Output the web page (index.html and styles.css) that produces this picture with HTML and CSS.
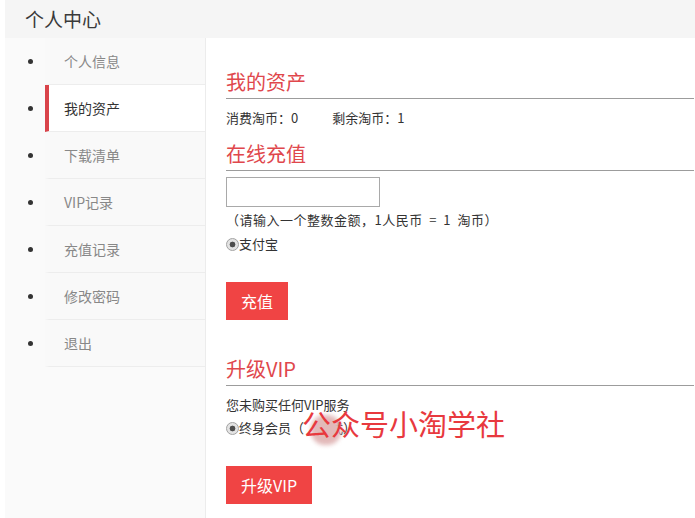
FILE: index.html
```html
<!DOCTYPE html>
<html lang="zh-CN">
<head>
<meta charset="utf-8">
<title>个人中心</title>
<link rel="stylesheet" href="styles.css">
</head>
<body>
<div class="page">
  <header class="topbar">个人中心</header>
  <div class="layout">
    <ul class="sidenav">
      <li class="nav-item"><span class="dot"></span><a class="nav-link">个人信息</a></li>
      <li class="nav-item"><span class="dot"></span><a class="nav-link active">我的资产</a></li>
      <li class="nav-item"><span class="dot"></span><a class="nav-link">下载清单</a></li>
      <li class="nav-item"><span class="dot"></span><a class="nav-link">VIP记录</a></li>
      <li class="nav-item"><span class="dot"></span><a class="nav-link">充值记录</a></li>
      <li class="nav-item"><span class="dot"></span><a class="nav-link">修改密码</a></li>
      <li class="nav-item"><span class="dot"></span><a class="nav-link">退出</a></li>
    </ul>
    <main class="content">
      <h2 class="title">我的资产</h2>
      <p class="line first-line"><span class="coin-spent">消费淘币：0</span><span>剩余淘币：1</span></p>

      <h2 class="title title-gap">在线充值</h2>
      <input class="amount" type="text">
      <p class="line hint">（请输入一个整数金额，1人民币 = 1 淘币）</p>
      <label class="line radio-row"><input class="radio" type="radio" name="pay" checked>支付宝</label>
      <button class="btn">充值</button>

      <h2 class="title title-gap2">升级VIP</h2>
      <p class="line vip-note">您未购买任何VIP服务</p>
      <div class="vip-row">
        <label class="line radio-row tight"><input class="radio" type="radio" name="vip" checked>终身会员（<span class="hidden-text">　　</span>式）</label>
        <span class="blob"></span>
        <span class="watermark">公众号小淘学社</span>
      </div>
      <button class="btn">升级VIP</button>
    </main>
  </div>
</div>
</body>
</html>
```

FILE: styles.css
```css
* { box-sizing: border-box; }
html, body {
  margin: 0;
  padding: 0;
  background: #fff;
}
body {
  font-family: "Noto Sans CJK SC", "Noto Sans", "Liberation Sans", sans-serif;
  font-size: 13px;
  color: #333;
}
.page {
  margin-left: 5px;
  min-height: 518px;
  display: flex;
  flex-direction: column;
}
.topbar {
  height: 38px;
  line-height: 38px;
  background: #f5f5f5;
  padding-left: 20px;
  font-size: 19px;
  color: #3a3a3a;
}
.layout {
  flex: 1;
  display: flex;
}
.sidenav {
  width: 201px;
  flex: none;
  margin: 0;
  padding: 0;
  list-style: none;
  background: #fafafa;
  border-right: 1px solid #ececec;
}
.nav-item {
  display: flex;
  align-items: stretch;
  height: 47px;
}
.dot {
  width: 40px;
  flex: none;
  display: flex;
  align-items: center;
}
.dot::before {
  content: "";
  width: 5px;
  height: 5px;
  border-radius: 50%;
  background: #333;
  margin-left: 23px;
}
.nav-link {
  flex: 1;
  display: flex;
  align-items: center;
  padding-left: 15px;
  border-left: 4px solid transparent;
  border-bottom: 1px solid #ededed;
  background: #f9f9f9;
  font-size: 14px;
  color: #888;
}
.nav-link.active {
  background: #fff;
  border-left-color: #d9434a;
  color: #333;
}
.content {
  flex: 1;
  padding: 32px 1px 0 20px;
  position: relative;
}
.title {
  margin: 0;
  font-size: 20px;
  line-height: 24px;
  font-weight: normal;
  color: #e0474c;
  padding-bottom: 4px;
  border-bottom: 1px solid #9c9c9c;
}
.title-gap { margin-top: 14px; }
.title-gap2 { margin-top: 37px; }
.line {
  margin: 0;
  line-height: 20px;
  display: block;
}
.first-line { margin-top: 9px; }
.coin-spent { margin-right: 34px; }
.amount {
  display: block;
  margin-top: 6px;
  width: 154px;
  height: 30px;
  border: 1px solid #a9a9a9;
  padding: 0 4px;
  font: inherit;
}
.hint {
  margin-top: 3px;
  letter-spacing: 0.5px;
  word-spacing: 3px;
}
.radio-row {
  display: flex;
  align-items: center;
  margin-top: 4px;
}
.radio {
  appearance: none;
  -webkit-appearance: none;
  width: 13px;
  height: 13px;
  margin: 0;
  border-radius: 50%;
  border: 1px solid #a2a2a2;
  background: radial-gradient(circle, #4d4d4d 0 2.6px, #e3e3e3 3.2px);
  flex: none;
}
.btn {
  display: block;
  margin-top: 28px;
  height: 38px;
  padding: 0 15px;
  border: none;
  background: #f04444;
  color: #fff;
  font-family: inherit;
  font-size: 16px;
}
.vip-note { margin-top: 9px; }
.vip-row {
  position: relative;
}
.tight { margin-top: 3px; }
.hidden-text { color: transparent; }
.blob {
  position: absolute;
  left: 85px;
  top: -3px;
  width: 30px;
  height: 30px;
  border-radius: 45%;
  background: #e2b9b9;
  filter: blur(2px);
}
.watermark {
  position: absolute;
  left: 76px;
  top: -13px;
  font-size: 29px;
  line-height: 36px;
  color: #e8393e;
  white-space: nowrap;
}
```
